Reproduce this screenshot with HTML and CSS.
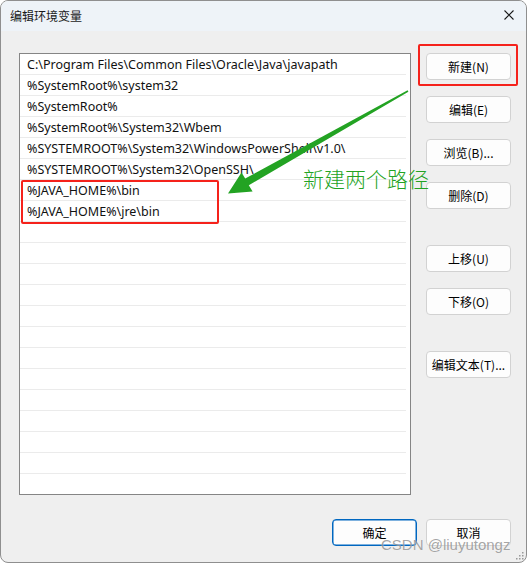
FILE: index.html
```html
<!doctype html>
<html lang="zh-CN">
<head>
    <meta charset="UTF-8">
    <title>编辑环境变量</title>
    <link rel="stylesheet" href="styles.css">
</head>
<body>
<div class="window">
    <div class="title-bar">
        <span class="title">编辑环境变量</span>
        <svg class="close" width="12" height="12" viewBox="0 0 12 12">
            <path d="M1.5 1.5 L10.5 10.5 M10.5 1.5 L1.5 10.5" stroke="#1a1a1a" stroke-width="1.1" fill="none"/>
        </svg>
    </div>
    <div class="body">
        <div class="main">
            <div class="list">
                <div class="row">C:\Program Files\Common Files\Oracle\Java\javapath</div>
                <div class="row">%SystemRoot%\system32</div>
                <div class="row">%SystemRoot%</div>
                <div class="row">%SystemRoot%\System32\Wbem</div>
                <div class="row">%SYSTEMROOT%\System32\WindowsPowerShell\v1.0\</div>
                <div class="row">%SYSTEMROOT%\System32\OpenSSH\</div>
                <div class="row">%JAVA_HOME%\bin</div>
                <div class="row">%JAVA_HOME%\jre\bin</div>
                <div class="row"></div>
                <div class="row"></div>
                <div class="row"></div>
                <div class="row"></div>
                <div class="row"></div>
                <div class="row"></div>
                <div class="row"></div>
                <div class="row"></div>
                <div class="row"></div>
                <div class="row"></div>
                <div class="row"></div>
                <div class="row"></div>
                <div class="row"></div>
            </div>
            <div class="side">
                <div class="group">
                    <button type="button" class="btn">新建(N)</button>
                    <button type="button" class="btn">编辑(E)</button>
                    <button type="button" class="btn">浏览(B)...</button>
                    <button type="button" class="btn">删除(D)</button>
                </div>
                <div class="group">
                    <button type="button" class="btn">上移(U)</button>
                    <button type="button" class="btn">下移(O)</button>
                </div>
                <div class="group">
                    <button type="button" class="btn">编辑文本(T)...</button>
                </div>
            </div>
        </div>
        <div class="footer">
            <button type="button" class="btn btn-ok">确定</button>
            <button type="button" class="btn">取消</button>
        </div>
    </div>

    <!-- 标注 -->
    <div class="mark mark-new"></div>
    <div class="mark mark-java"></div>
    <svg class="arrow" width="527" height="563" viewBox="0 0 527 563">
        <polygon points="407.6,90.3 245.2,178.6 241.5,172.6 228,193.5 252.6,191.4 248.8,185.2 408.4,91.7" fill="#23a323"/>
    </svg>
    <div class="note">新建两个路径</div>
    <div class="watermark">CSDN @liuyutongz</div>
    <svg class="grip" width="10" height="10" viewBox="0 0 10 10">
        <rect x="7" y="1" width="1.5" height="1.5" fill="#9a9a9a"/>
        <rect x="4" y="4" width="1.5" height="1.5" fill="#9a9a9a"/>
        <rect x="7" y="4" width="1.5" height="1.5" fill="#9a9a9a"/>
        <rect x="1" y="7" width="1.5" height="1.5" fill="#9a9a9a"/>
        <rect x="4" y="7" width="1.5" height="1.5" fill="#9a9a9a"/>
        <rect x="7" y="7" width="1.5" height="1.5" fill="#9a9a9a"/>
    </svg>
</div>
</body>
</html>
```

FILE: styles.css
```css
* {
    margin: 0;
    padding: 0;
    box-sizing: border-box;
}

body {
    background-color: #ffffff;
    font-family: "Noto Sans", "Noto Sans CJK SC", sans-serif;
    font-size: 12px;
    color: #000;
}

.window {
    position: relative;
    width: 527px;
    height: 563px;
    border: 1px solid #8f8f8f;
    border-radius: 8px;
    overflow: hidden;
    background-color: #efefef;
}

.title-bar {
    height: 30px;
    display: flex;
    align-items: center;
    justify-content: space-between;
    padding: 0 11px 2px 9px;
    background-color: #eef3f8;
}

.title {
    font-family: "Noto Sans CJK SC", sans-serif;
    font-size: 12px;
    color: #1a1a1a;
}

.body {
    padding: 22px 15px 0 18px;
}

.main {
    display: flex;
    gap: 15px;
}

.list {
    width: 392px;
    height: 442px;
    border: 1px solid #858585;
    background-color: #fff;
    padding-right: 4px;
    overflow: hidden;
}

.row {
    height: 21px;
    line-height: 21px;
    padding-left: 7px;
    font-size: 12.5px;
    border-bottom: 1px solid #ebebeb;
    white-space: nowrap;
    overflow: hidden;
    color: #111;
}

.side {
    display: flex;
    flex-direction: column;
    gap: 36px;
}

.group {
    display: flex;
    flex-direction: column;
    gap: 16px;
}

.btn {
    width: 85px;
    height: 27px;
    border: 1px solid #d2d2d2;
    border-radius: 4px;
    background-color: #fdfdfd;
    font-family: "Noto Sans CJK SC", sans-serif;
    font-size: 12px;
    color: #000;
    outline: none;
}

.btn-ok {
    border: 1px solid #0067c0;
    box-shadow: inset 0 0 0 0.5px #0067c0;
}

.footer {
    display: flex;
    justify-content: flex-end;
    gap: 9px;
    margin-top: 24px;
}

.mark {
    position: absolute;
    border: 2px solid #f5221b;
    border-radius: 2px;
}

.mark-new {
    left: 417px;
    top: 43px;
    width: 100px;
    height: 42px;
}

.mark-java {
    left: 20px;
    top: 179px;
    width: 198px;
    height: 44px;
}

.arrow {
    position: absolute;
    left: -1px;
    top: -1px;
}

.note {
    position: absolute;
    left: 302px;
    top: 164px;
    font-family: "Noto Sans CJK SC", sans-serif;
    font-weight: 300;
    font-size: 21px;
    line-height: 26px;
    color: #23a323;
}

.watermark {
    position: absolute;
    left: 380px;
    top: 535px;
    font-family: "Liberation Sans", sans-serif;
    font-size: 15px;
    color: rgba(90, 90, 90, 0.55);
    text-shadow: 0 0 1px rgba(255, 255, 255, 0.8);
}

.grip {
    position: absolute;
    right: 1px;
    bottom: 1px;
}
```
